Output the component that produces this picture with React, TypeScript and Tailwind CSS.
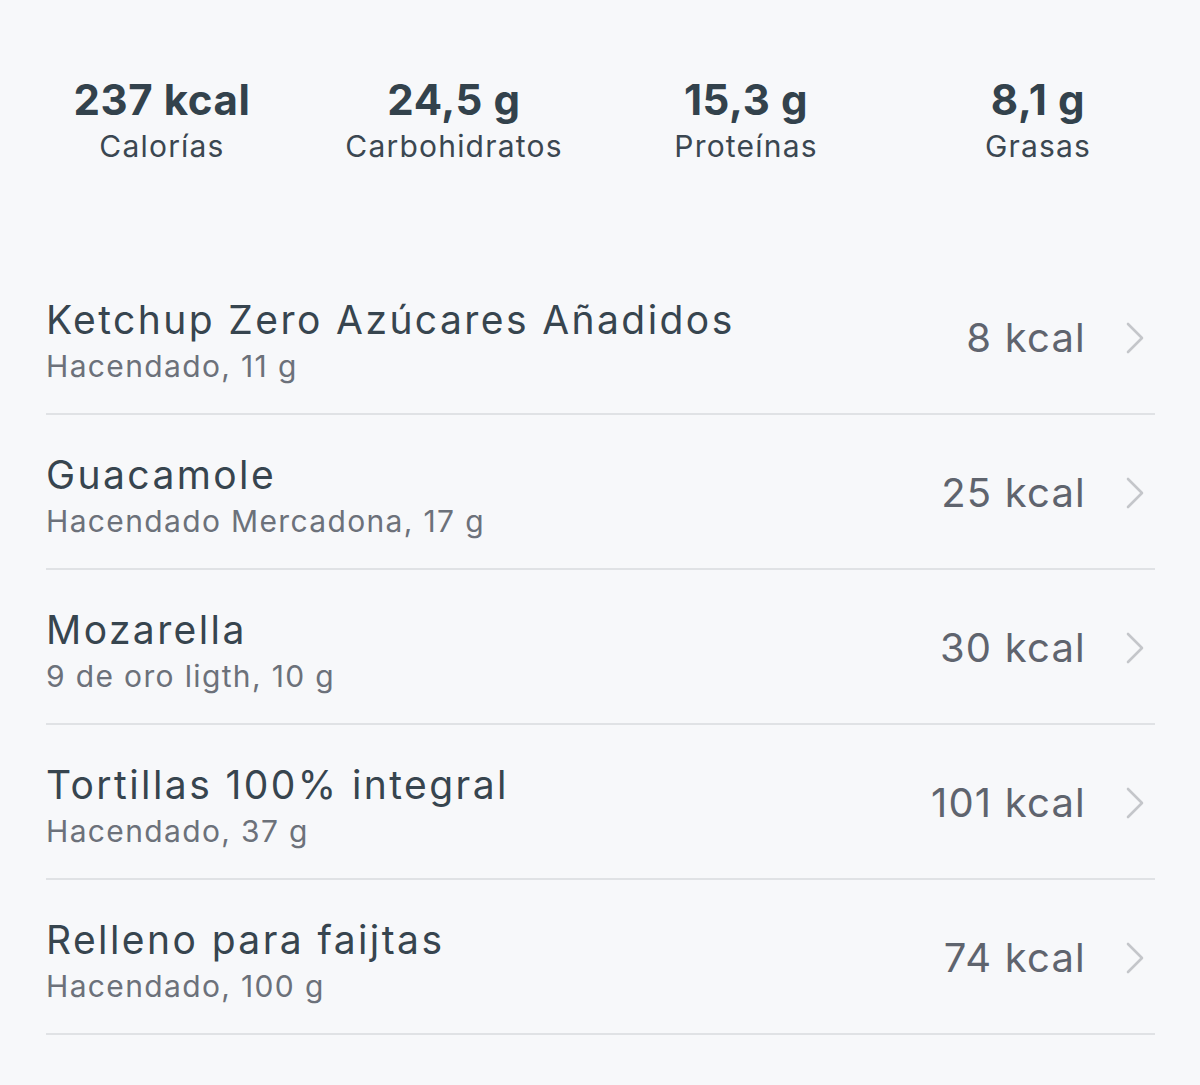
type Stat = {
  value: string;
  label: string;
};

type FoodItem = {
  name: string;
  detail: string;
  kcal: number;
};

const stats: Stat[] = [
  { value: "237 kcal", label: "Calorías" },
  { value: "24,5 g", label: "Carbohidratos" },
  { value: "15,3 g", label: "Proteínas" },
  { value: "8,1 g", label: "Grasas" },
];

const foods: FoodItem[] = [
  { name: "Ketchup Zero Azúcares Añadidos", detail: "Hacendado, 11 g", kcal: 8 },
  { name: "Guacamole", detail: "Hacendado Mercadona, 17 g", kcal: 25 },
  { name: "Mozarella", detail: "9 de oro ligth, 10 g", kcal: 30 },
  { name: "Tortillas 100% integral", detail: "Hacendado, 37 g", kcal: 101 },
  { name: "Relleno para faijtas", detail: "Hacendado, 100 g", kcal: 74 },
];

function Chevron() {
  return (
    <svg
      width="20"
      height="34"
      viewBox="0 0 20 34"
      fill="none"
      className="ml-[39px] mr-[10px] text-[#c4c6ca]"
      aria-hidden="true"
    >
      <polyline
        points="3,3 17,17 3,31"
        stroke="currentColor"
        strokeWidth="2.6"
        strokeLinecap="round"
        strokeLinejoin="round"
      />
    </svg>
  );
}

function StatBlock({ value, label }: Stat) {
  return (
    <div className="flex flex-col items-center">
      <span className="text-[42px] leading-[48px] font-bold tracking-[0.6px] text-[#33424c]">
        {value}
      </span>
      <span className="mt-1 text-[30px] leading-[36px] tracking-[0.04em] text-[#3b4751]">
        {label}
      </span>
    </div>
  );
}

function FoodRow({ name, detail, kcal }: FoodItem) {
  return (
    <button
      type="button"
      className="flex w-full items-center border-b-2 border-[#e0e2e5] pt-[37px] pb-[29px] text-left"
    >
      <div className="flex min-w-0 flex-1 flex-col">
        <span className="text-[39px] leading-[46px] tracking-[0.062em] text-[#37454f]">{name}</span>
        <span className="mt-[5px] text-[30px] leading-[36px] tracking-[0.045em] text-[#6c717a]">
          {detail}
        </span>
      </div>
      <div className="mb-[6px] flex items-center">
        <span className="text-[40px] leading-[48px] tracking-[0.03em] text-[#5f646e]">
          {kcal} kcal
        </span>
        <Chevron />
      </div>
    </button>
  );
}

export default function App() {
  return (
    <div className="min-h-[1085px] w-[1200px] bg-[#f7f8fa] font-['Inter',sans-serif]">
      <div className="grid grid-cols-4 px-4 pt-[76px]">
        {stats.map((s) => (
          <StatBlock key={s.label} {...s} />
        ))}
      </div>
      <div className="mt-[96px] pl-[46px] pr-[45px]">
        {foods.map((f) => (
          <FoodRow key={f.name} {...f} />
        ))}
      </div>
    </div>
  );
}
